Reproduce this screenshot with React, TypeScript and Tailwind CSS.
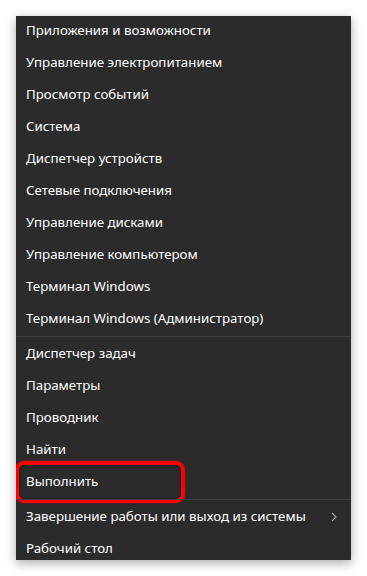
import React from 'react';

const groupOne = [
  'Приложения и возможности',
  'Управление электропитанием',
  'Просмотр событий',
  'Система',
  'Диспетчер устройств',
  'Сетевые подключения',
  'Управление дисками',
  'Управление компьютером',
  'Терминал Windows',
  'Терминал Windows (Администратор)',
];

const groupTwo = ['Диспетчер задач', 'Параметры', 'Проводник', 'Найти', 'Выполнить'];

const MenuRow: React.FC<{ label: string; highlight?: boolean; submenu?: boolean }> = ({
  label,
  highlight = false,
  submenu = false,
}) => (
  <div className="relative flex h-8 items-center justify-between pb-[3px] pl-[10px] pr-[14px]">
    <span>{label}</span>
    {submenu && (
      <svg width="6" height="10" viewBox="0 0 6 10" className="mt-[1px] text-[#a8a8a8]">
        <path d="M1 1l4 4-4 4" fill="none" stroke="currentColor" strokeWidth="1.1" />
      </svg>
    )}
    {highlight && (
      <div className="pointer-events-none absolute left-[-1px] top-[-6px] h-[42px] w-[170px] rounded-[9px] border-[4px] border-[#ff0000] shadow-[0_0_2px_rgba(255,0,0,0.6),inset_0_0_3px_rgba(0,0,0,0.6)]" />
    )}
  </div>
);

export default function App() {
  return (
    <div className="h-[576px] w-[367px] bg-white pl-4 pt-4">
      <div
        className="h-[544px] w-[335px] overflow-hidden bg-[#2b2b2b] text-[13.3px] text-white shadow-[0_3px_10px_rgba(0,0,0,0.35)]"
        style={{ fontFamily: '"Noto Sans", "Open Sans", sans-serif' }}
      >
        {groupOne.map((item) => (
          <MenuRow key={item} label={item} />
        ))}
        <div className="mb-[2px] h-px bg-[#3e3e3e]" />
        {groupTwo.map((item) => (
          <MenuRow key={item} label={item} highlight={item === 'Выполнить'} />
        ))}
        <div className="relative z-0 mb-[2px] h-px bg-[#3e3e3e]" />
        <MenuRow label="Завершение работы или выход из системы" submenu />
        <MenuRow label="Рабочий стол" />
      </div>
    </div>
  );
}
